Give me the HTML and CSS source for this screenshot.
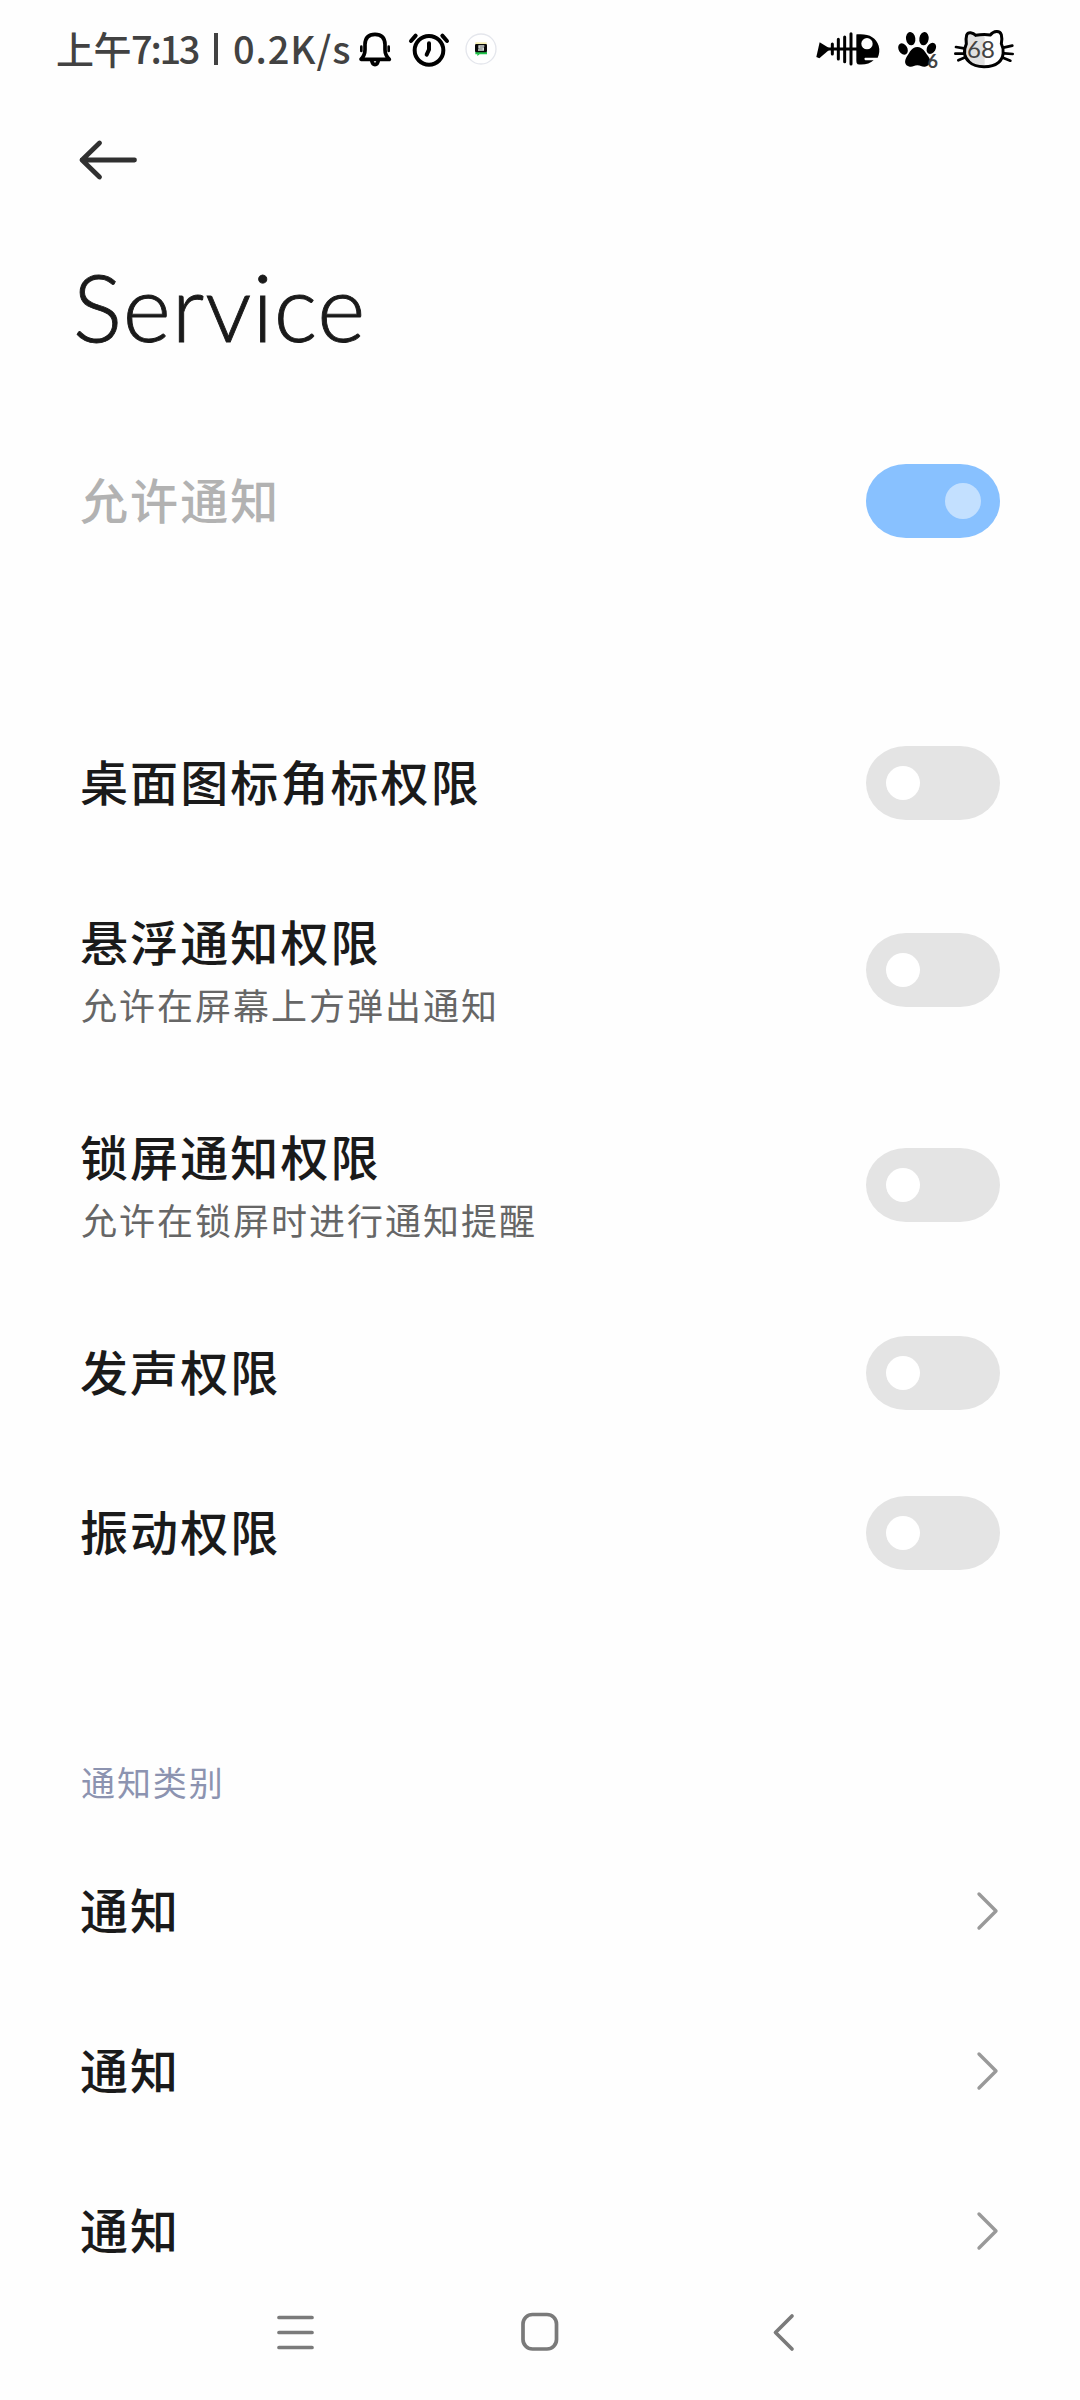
FILE: index.html
```html
<!DOCTYPE html>
<html lang="zh-CN">
<head>
    <meta charset="UTF-8">
    <meta name="viewport" content="width=device-width, initial-scale=1.0">
    <title>Service</title>
    <link rel="stylesheet" href="styles.css">
</head>
<body>

    <header class="status-bar">
        <div class="status-text">
            <span class="status-time"><span class="status-ampm">上午</span>7:13</span>
            <span class="status-divider"></span>
            <span class="status-speed">0.2K/s</span>
        </div>
        <svg class="icon-bell" width="36" height="40" viewBox="0 0 108 120">
            <g fill="none" stroke="#000" stroke-width="11" stroke-linejoin="round" stroke-linecap="round">
                <path d="M12 91 Q24 78 24 62 V46 Q25 16 54 16 Q83 16 84 46 V62 Q84 78 97 91 Z"/>
                <path d="M44 94 Q46 107 54 107 Q62 107 64 94"/>
                <path d="M13 53 V66 M95 53 V66" stroke-width="8"/>
            </g>
        </svg>
        <svg class="icon-alarm" width="42" height="40" viewBox="0 0 126 120">
            <g fill="none" stroke="#000" stroke-width="12" stroke-linecap="round">
                <circle cx="63" cy="64" r="43"/>
                <path d="M63 43 V62 L56 77 M9 36 L23 20 M103 20 L117 36"/>
            </g>
        </svg>
        <svg class="icon-app" width="34" height="34" viewBox="0 0 102 102">
            <circle cx="51" cy="51" r="45" fill="#fff" stroke="#e4e6ec" stroke-width="4"/>
            <rect x="34" y="31" width="34" height="7" fill="#f5eeb0"/>
            <path d="M34 60 H69 V67 H47 L40 72 V67 H34 Z" fill="#20c34a"/>
            <rect x="33" y="36" width="36" height="25" rx="4" fill="#090909"/>
            <path d="M61 42 H45 V48 H58 V54 H42" fill="none" stroke="#d9dedb" stroke-width="4"/>
        </svg>

        <svg class="icon-fish" width="66" height="36" viewBox="0 0 198 108">
            <path d="M4 78 L14 34 L42 51 V57 L13 82 Z" fill="#000"/>
            <path d="M38 54 H132 M52 39 V69 M70 25 V84 M89 18 V92 M108 8 V99" fill="none" stroke="#000" stroke-width="9" stroke-linecap="round"/>
            <path d="M125 10 Q178 5 191 44 Q196 62 188 80 H150 Q145 84 151 88 H176 Q160 103 128 100 Q124 98 124 90 V16 Q124 10 125 10 Z" fill="#000"/>
            <circle cx="156" cy="38" r="17" fill="#fefefe"/>
        </svg>
        <div class="signal">
            <svg width="42" height="40" viewBox="0 0 126 120">
                <ellipse cx="41" cy="29" rx="14" ry="20" transform="rotate(-8 41 29)"/>
                <ellipse cx="81" cy="29" rx="14" ry="20" transform="rotate(8 81 29)"/>
                <ellipse cx="18" cy="60" rx="13" ry="18" transform="rotate(-30 18 60)"/>
                <ellipse cx="103" cy="58" rx="13" ry="18" transform="rotate(30 103 58)"/>
                <path d="M61 54 C78 54 84 70 93 81 C106 97 97 112 84 113 C74 114 71 109 61 109 C51 109 47 115 38 113 C22 110 21 96 30 82 C39 70 43 54 61 54 Z"/>
            </svg>
            <span class="signal-count">6</span>
        </div>
        <div class="battery">
            <svg width="60" height="42" viewBox="0 0 180 126">
                <path d="M41 24 C43 15 55 14 64 22 Q86 18 110 22 C121 12 138 6 142 20 V47 C151 65 150 89 134 103 C113 121 66 121 46 102 C28 86 29 66 37 48 Z" fill="#fefefe"/>
                <path d="M41 24 C43 15 55 14 64 22 Q82 18 92 20 V112 Q65 119 46 102 C28 86 29 66 37 48 Z" fill="#e0e0e0"/>
                <path d="M37 48 Q35 31 38 21 C42 10 57 13 65 22 Q88 18 109 21 C119 9 137 6 142 20 Q145 31 142 47 C151 65 150 89 134 103 C113 121 66 121 46 102 C28 86 29 66 37 48 Z" fill="none" stroke="#000" stroke-width="9"/>
                <path d="M6 57 L30 61 M4 77 H28 M13 97 L34 88 M148 59 L175 53 M151 76 L176 78 M147 89 L169 98" fill="none" stroke="#000" stroke-width="8" stroke-linecap="round"/>
            </svg>
            <span class="battery-level">68</span>
        </div>
    </header>

    <div class="toolbar">
        <svg width="60" height="44" viewBox="0 0 60 44">
            <path d="M56.500 22 H4 M21.500 5 L4 22 L21.500 39" fill="none" stroke="#303030" stroke-width="4.8" stroke-linecap="round" stroke-linejoin="round"/>
        </svg>
    </div>

    <h1>Service</h1>

    <main>
        <section class="group">
            <div class="row disabled">
                <div class="label">允许通知</div>
                <div class="toggle on"></div>
            </div>
        </section>

        <section class="group">
            <div class="row">
                <div class="label">桌面图标角标权限</div>
                <div class="toggle"></div>
            </div>
            <div class="row tall">
                <div>
                    <div class="label">悬浮通知权限</div>
                    <div class="summary">允许在屏幕上方弹出通知</div>
                </div>
                <div class="toggle"></div>
            </div>
            <div class="row tall">
                <div>
                    <div class="label">锁屏通知权限</div>
                    <div class="summary">允许在锁屏时进行通知提醒</div>
                </div>
                <div class="toggle"></div>
            </div>
            <div class="row">
                <div class="label">发声权限</div>
                <div class="toggle"></div>
            </div>
            <div class="row">
                <div class="label">振动权限</div>
                <div class="toggle"></div>
            </div>
        </section>

        <section class="group">
            <h2>通知类别</h2>
            <div class="row">
                <div class="label">通知</div>
                <svg class="chevron" width="24" height="40" viewBox="0 0 24 40"><path d="M3 3 L20 20 L3 37"/></svg>
            </div>
            <div class="row">
                <div class="label">通知</div>
                <svg class="chevron" width="24" height="40" viewBox="0 0 24 40"><path d="M3 3 L20 20 L3 37"/></svg>
            </div>
            <div class="row">
                <div class="label">通知</div>
                <svg class="chevron" width="24" height="40" viewBox="0 0 24 40"><path d="M3 3 L20 20 L3 37"/></svg>
            </div>
        </section>
    </main>

    <nav class="nav-bar">
        <svg width="40" height="44" viewBox="0 0 40 44">
            <path d="M3 7.500 H36 M3 22.500 H36 M3 37.500 H36"/>
        </svg>
        <svg width="40" height="44" viewBox="0 0 40 44">
            <rect x="3" y="4.500" width="33.500" height="34.500" rx="9.500"/>
        </svg>
        <svg width="40" height="44" viewBox="0 0 40 44">
            <path d="M28 6 L11.500 22.500 L28 39"/>
        </svg>
    </nav>

</body>
</html>
```
FILE: styles.css
```css
* {
    box-sizing: border-box;
}

body {
    margin: 0;
    height: 2400px;
    background-color: #fefefe;
    color: #1a1a1a;
    font-family: Lato, 'Noto Sans CJK SC', sans-serif;
    overflow: hidden;
}

svg {
    display: block;
    flex: none;
}

.status-bar {
    display: flex;
    align-items: center;
    height: 98px;
    padding: 0 66px 0 56px;
}

.status-text {
    display: flex;
    align-items: center;
    width: 301px;
    height: 50px;
    color: #424242;
    font-family: 'Noto Sans CJK SC', sans-serif;
    font-size: 38px;
    font-weight: 500;
    line-height: 46px;
    white-space: nowrap;
}

.status-time {
    width: 158px;
    padding-bottom: 2px;
    letter-spacing: -2.3px;
}

.status-ampm {
    letter-spacing: -0.5px;
}

.status-divider {
    width: 4px;
    height: 32px;
    margin-right: 15px;
    background-color: #424242;
}

.status-speed {
    padding-bottom: 2px;
    letter-spacing: 0.9px;
}

.icon-alarm {
    margin-left: 15px;
}

.icon-app {
    margin-left: 14px;
}

.icon-fish {
    margin-left: auto;
}

.signal {
    position: relative;
    margin-left: 16px;
}

.signal-count {
    position: absolute;
    right: 1px;
    bottom: 0;
    color: #424242;
    font-size: 18px;
    font-weight: 700;
    line-height: 16px;
}

.battery {
    position: relative;
    margin-left: 15px;
}

.battery-level {
    position: absolute;
    top: 8px;
    left: 13px;
    color: #424242;
    font-size: 24px;
    line-height: 26px;
}

.toolbar {
    height: 124px;
    padding: 40px 78px;
}

h1 {
    margin: 0;
    height: 199px;
    padding-left: 73px;
    font-size: 92px;
    font-weight: 300;
    line-height: 169px;
    letter-spacing: 1px;
    -webkit-text-stroke: 0.9px #1a1a1a;
}

.group {
    margin-bottom: 122px;
}

.row {
    display: flex;
    align-items: center;
    justify-content: space-between;
    height: 160px;
    padding: 0 80px 0 80px;
}

.row.tall {
    height: 215px;
    padding-bottom: 1px;
}

.label {
    padding-bottom: 1px;
    font-size: 48px;
    font-weight: 500;
    line-height: 63px;
    letter-spacing: 2.1px;
}

.disabled .label {
    color: #b2b2b2;
}

.summary {
    color: #666;
    font-size: 36px;
    line-height: 48px;
    letter-spacing: 2px;
    margin-top: 7px;
    padding-left: 1px;
}

.toggle {
    display: flex;
    align-items: center;
    width: 134px;
    height: 74px;
    padding: 0 20px;
    border-radius: 40px / 37px;
    background-color: #e4e4e4;
}

.toggle::before {
    content: "";
    width: 34px;
    height: 34px;
    border-radius: 50%;
    background-color: #fff;
}

.toggle.on {
    justify-content: flex-end;
    padding: 0 19px;
    background-color: #88c1ff;
}

.toggle.on::before {
    width: 36px;
    height: 36px;
    background-color: #c3e0ff;
}

h2 {
    margin: 0;
    height: 96px;
    padding: 24px 81px;
    color: #8c93b0;
    font-size: 34px;
    font-weight: 400;
    line-height: 48px;
    letter-spacing: 1.9px;
}

.chevron path {
    fill: none;
    stroke: #999;
    stroke-width: 3.4;
    stroke-linecap: round;
    stroke-linejoin: round;
}

.nav-bar {
    position: fixed;
    left: 0;
    right: 0;
    bottom: 0;
    display: flex;
    align-items: center;
    justify-content: center;
    gap: 204px;
    height: 136px;
    background-color: #fefefe;
}

.nav-bar path,
.nav-bar rect {
    fill: none;
    stroke: #7a7a7a;
    stroke-width: 3.7;
    stroke-linecap: round;
    stroke-linejoin: round;
}
```
